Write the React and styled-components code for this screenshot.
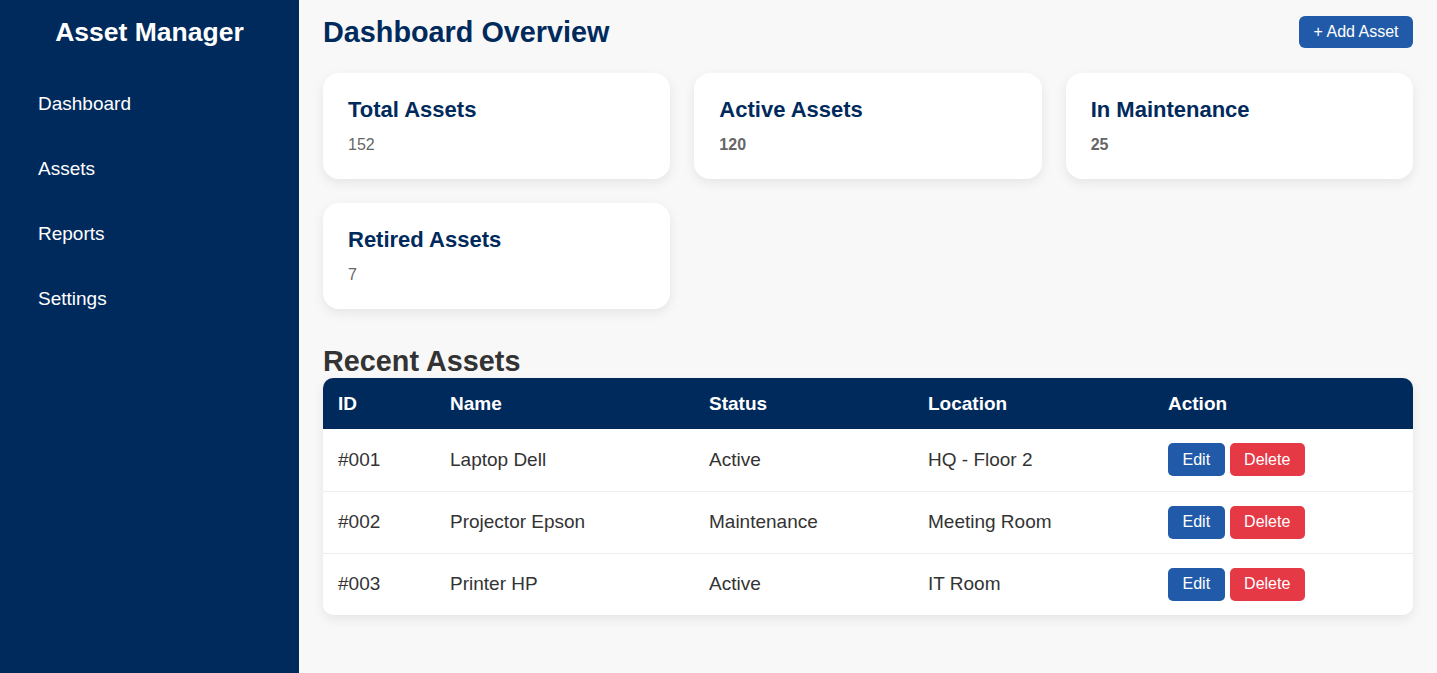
import React from 'react';
import styled, { createGlobalStyle } from 'styled-components';

const GlobalStyle = createGlobalStyle`
  * { box-sizing: border-box; }
  body {
    margin: 0;
    font-family: 'Liberation Sans', Arial, sans-serif;
    background: #f8f8f8;
  }
`;

const Layout = styled.div`
  display: flex;
  min-height: 673px;
`;

const Sidebar = styled.aside`
  width: 299px;
  flex-shrink: 0;
  background: #002a5c;
  color: #fff;
  padding: 17px 0 0;
`;

const Brand = styled.h2`
  margin: 0 0 46px;
  font-size: 26.5px;
  line-height: 30px;
  font-weight: bold;
  text-align: center;
`;

const Nav = styled.ul`
  list-style: none;
  margin: 0;
  padding: 0 38px;
  display: flex;
  flex-direction: column;
  gap: 43px;
`;

const NavItem = styled.li`
  font-size: 19px;
  line-height: 22px;
  cursor: pointer;
`;

const Main = styled.main`
  flex: 1;
  padding: 16px 24px 24px;
`;

const Header = styled.div`
  display: flex;
  align-items: center;
  justify-content: space-between;
  margin-bottom: 25px;
`;

const Title = styled.h1`
  margin: 0;
  font-size: 28.8px;
  line-height: 32px;
  color: #002a5c;
`;

const Button = styled.button`
  border: none;
  color: #fff;
  font-family: inherit;
  font-size: 16px;
  line-height: 18px;
  height: ${p => p.$h || 33}px;
  border-radius: ${p => p.$radius || 5}px;
  padding: 0 14.5px;
  background: ${p => (p.$danger ? '#e63946' : '#215aa8')};
  cursor: pointer;
`;

const Cards = styled.div`
  display: grid;
  grid-template-columns: repeat(auto-fill, minmax(300px, 1fr));
  gap: 24px;
`;

const Card = styled.div`
  background: #fff;
  border-radius: 16px;
  padding: 24px 25px;
  height: 106px;
  box-shadow: 0 4px 12px rgba(0, 0, 0, 0.08);
`;

const CardTitle = styled.h3`
  margin: 0 0 14px;
  font-size: 22px;
  line-height: 25px;
  color: #002a5c;
`;

const CardValue = styled.p`
  margin: 0;
  font-size: 16px;
  line-height: 18px;
  color: #666;
  font-weight: ${p => (p.$bold ? 'bold' : 'normal')};
`;

const SectionTitle = styled.h2`
  margin: 36px 0 1px;
  font-size: 28.8px;
  line-height: 32px;
  color: #333;
`;

const TableWrap = styled.div`
  background: #fff;
  border-radius: 10px;
  overflow: hidden;
  box-shadow: 0 4px 12px rgba(0, 0, 0, 0.08);
`;

const Table = styled.table`
  width: 100%;
  border-collapse: collapse;
  table-layout: fixed;
`;

const Th = styled.th`
  background: #002a5c;
  color: #fff;
  text-align: left;
  font-size: 19px;
  line-height: 21px;
  padding: 15px;
  width: ${p => p.$w}px;
`;

const Td = styled.td`
  font-size: 19px;
  color: #333;
  padding: 14px 15px;
  height: 62px;
  border-top: ${p => (p.$first ? 'none' : '1px solid #eee')};
`;

const Actions = styled.div`
  display: flex;
  gap: 5px;
`;

const stats = [
  { title: 'Total Assets', value: '152' },
  { title: 'Active Assets', value: '120', bold: true },
  { title: 'In Maintenance', value: '25', bold: true },
  { title: 'Retired Assets', value: '7' },
];

const assets = [
  { id: '#001', name: 'Laptop Dell', status: 'Active', location: 'HQ - Floor 2' },
  { id: '#002', name: 'Projector Epson', status: 'Maintenance', location: 'Meeting Room' },
  { id: '#003', name: 'Printer HP', status: 'Active', location: 'IT Room' },
];

const columns = [
  { label: 'ID', w: 112 },
  { label: 'Name', w: 259 },
  { label: 'Status', w: 219 },
  { label: 'Location', w: 240 },
  { label: 'Action', w: 260 },
];

export default function App() {
  return (
    <>
      <GlobalStyle />
      <Layout>
        <Sidebar>
          <Brand>Asset Manager</Brand>
          <Nav>
            <NavItem>Dashboard</NavItem>
            <NavItem>Assets</NavItem>
            <NavItem>Reports</NavItem>
            <NavItem>Settings</NavItem>
          </Nav>
        </Sidebar>
        <Main>
          <Header>
            <Title>Dashboard Overview</Title>
            <Button $radius={6} $h={32}>+ Add Asset</Button>
          </Header>
          <Cards>
            {stats.map(s => (
              <Card key={s.title}>
                <CardTitle>{s.title}</CardTitle>
                <CardValue $bold={s.bold}>{s.value}</CardValue>
              </Card>
            ))}
          </Cards>
          <SectionTitle>Recent Assets</SectionTitle>
          <TableWrap>
            <Table>
              <thead>
                <tr>
                  {columns.map(c => (
                    <Th key={c.label} $w={c.w}>{c.label}</Th>
                  ))}
                </tr>
              </thead>
              <tbody>
                {assets.map((a, i) => (
                  <tr key={a.id}>
                    <Td $first={i === 0}>{a.id}</Td>
                    <Td $first={i === 0}>{a.name}</Td>
                    <Td $first={i === 0}>{a.status}</Td>
                    <Td $first={i === 0}>{a.location}</Td>
                    <Td $first={i === 0}>
                      <Actions>
                        <Button>Edit</Button>
                        <Button $danger>Delete</Button>
                      </Actions>
                    </Td>
                  </tr>
                ))}
              </tbody>
            </Table>
          </TableWrap>
        </Main>
      </Layout>
    </>
  );
}
